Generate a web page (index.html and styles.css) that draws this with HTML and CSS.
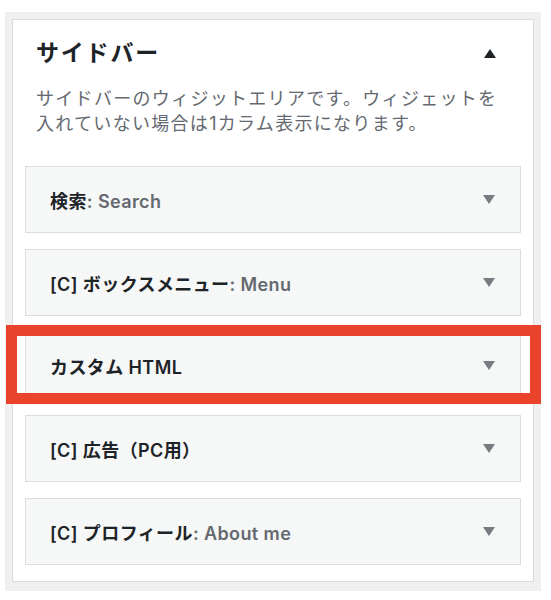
FILE: index.html
```html
<!DOCTYPE html>
<html lang="ja">
<head>
  <meta charset="utf-8" />
  <title>サイドバー</title>
  <link rel="stylesheet" href="styles.css">
</head>
<body>
<div class="sidebar-wrap">
  <div class="sidebar">
    <div class="sidebar-head">
      <h2>サイドバー</h2>
      <svg class="arrow" width="12" height="9" viewBox="0 0 12 9"><polygon points="0,9 6,0 12,9" fill="#1d2327"/></svg>
    </div>
    <p class="sidebar-desc">サイドバーのウィジットエリアです。ウィジェットを<br>入れていない場合は1カラム表示になります。</p>
    <ul class="widgets">
      <li class="widget">
        <h3>検索<span class="widget-sub">: Search</span></h3>
        <svg class="arrow" width="12" height="9" viewBox="0 0 12 9"><polygon points="0,0 12,0 6,9" fill="#787c82"/></svg>
      </li>
      <li class="widget">
        <h3>[C] ボックスメニュー<span class="widget-sub">: Menu</span></h3>
        <svg class="arrow" width="12" height="9" viewBox="0 0 12 9"><polygon points="0,0 12,0 6,9" fill="#787c82"/></svg>
      </li>
      <li class="widget">
        <h3>カスタム HTML</h3>
        <svg class="arrow" width="12" height="9" viewBox="0 0 12 9"><polygon points="0,0 12,0 6,9" fill="#787c82"/></svg>
        <div class="highlight"></div>
      </li>
      <li class="widget">
        <h3>[C] 広告（PC用）</h3>
        <svg class="arrow" width="12" height="9" viewBox="0 0 12 9"><polygon points="0,0 12,0 6,9" fill="#787c82"/></svg>
      </li>
      <li class="widget">
        <h3>[C] プロフィール<span class="widget-sub">: About me</span></h3>
        <svg class="arrow" width="12" height="9" viewBox="0 0 12 9"><polygon points="0,0 12,0 6,9" fill="#787c82"/></svg>
      </li>
    </ul>
  </div>
</div>
</body>
</html>
```

FILE: styles.css
```css
body,h2,h3,p,ul,li{margin:0;padding:0;}
ul{list-style:none;}
body{background:#fff;font-family:Inter,"Noto Sans CJK JP",sans-serif;color:#1d2327;}

.sidebar-wrap{width:536px;margin:12px 0 0 5px;padding:7px 7px 9px;box-sizing:border-box;background:#f0f0f1;}
.sidebar{background:#fff;border:1px solid #dcdcde;padding:0 12px 16px;}

.sidebar-head{display:flex;justify-content:space-between;align-items:center;height:30px;padding:18px 25px 0 11px;}
.sidebar-head h2{font-size:23px;line-height:30px;font-weight:700;letter-spacing:1.8px;}
.sidebar-desc{margin:18px 0 0 11px;font-size:18px;line-height:25px;letter-spacing:1.3px;color:#646970;}

.widgets{margin-top:30px;}
.widget{position:relative;display:flex;justify-content:space-between;align-items:center;height:67px;box-sizing:border-box;padding:0 25px 0 24px;border:1px solid #dcdcde;background:#f6f7f7;}
.widget + .widget{margin-top:16px;}
.widget h3{font-size:18px;font-weight:600;letter-spacing:0.4px;color:#1d2327;}
.widget-sub{color:#646970;}
.arrow{display:block;flex:none;}

/* annotation frame */
.highlight{position:absolute;top:-8px;left:-20px;right:-21px;bottom:-6px;border:11px solid #e9432b;z-index:2;}
```
